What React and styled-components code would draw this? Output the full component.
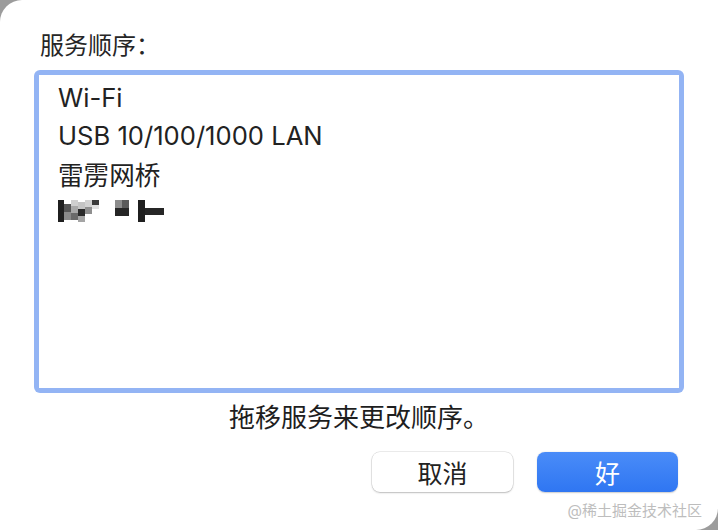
import React from "react";
import styled, { createGlobalStyle } from "styled-components";

const GlobalStyle = createGlobalStyle`
  html, body {
    margin: 0;
    padding: 0;
    background: #9c9c9c;
  }
  body {
    font-family: "Inter", "Noto Sans CJK SC", sans-serif;
    color: #222;
  }
`;

const services = ["Wi-Fi", "USB 10/100/1000 LAN", "雷雳网桥"];

// the blurred item in the screenshot, drawn as mosaic blocks
const mosaic = [
  [0, 0, 6, 22, "#1f1f1f"],
  [6, 4, 7, 8, "#555"],
  [6, 12, 7, 8, "#8a8a8a"],
  [13, 0, 7, 6, "#cfcfcf"],
  [13, 6, 7, 7, "#a8a8a8"],
  [13, 13, 7, 7, "#6a6a6a"],
  [20, 2, 7, 7, "#c4c4c4"],
  [20, 9, 7, 7, "#2a2a2a"],
  [20, 16, 7, 6, "#a5a5a5"],
  [27, 0, 7, 7, "#d2d2d2"],
  [27, 7, 7, 7, "#8f8f8f"],
  [34, 0, 7, 5, "#3a3a3a"],
  [34, 5, 7, 4, "#e0e0e0"],
  [57, 0, 7, 8, "#8c8c8c"],
  [57, 8, 14, 8, "#262626"],
  [64, 0, 7, 8, "#5a5a5a"],
  [80, 0, 7, 22, "#1f1f1f"],
  [87, 8, 19, 7, "#262626"],
];

const App = () => {
  return (
    <>
      <GlobalStyle />
      <Window>
        <Label>服务顺序：</Label>
        <FocusRing>
          <List>
            {services.map(s => (
              <Row key={s}>{s}</Row>
            ))}
            <Row>
              <svg width="106" height="22" viewBox="0 0 106 22">
                {mosaic.map(([x, y, w, h, c], i) => (
                  <rect key={i} x={x} y={y} width={w} height={h} fill={c} />
                ))}
              </svg>
            </Row>
          </List>
        </FocusRing>
        <Hint>拖移服务来更改顺序。</Hint>
        <Buttons>
          <Button>取消</Button>
          <Button primary>好</Button>
        </Buttons>
        <Watermark>@稀土掘金技术社区</Watermark>
      </Window>
    </>
  );
};

export default App;

const Window = styled.div`
  position: relative;
  width: 718px;
  height: 530px;
  box-sizing: border-box;
  background: #ffffff;
  border-top-left-radius: 22px;
  border-bottom-right-radius: 22px;
  display: flex;
  flex-direction: column;
  padding-top: 32px;
`;

const Label = styled.div`
  margin-left: 40px;
  font-size: 24px;
  line-height: 28px;
  color: #262626;
`;

const FocusRing = styled.div`
  margin: 10px 34px 0 34px;
  height: 323px;
  box-sizing: border-box;
  padding: 5px;
  border-radius: 6px;
  background: #93b4f4;
`;

const List = styled.div`
  height: 100%;
  box-sizing: border-box;
  background: #ffffff;
  padding-top: 3px;
  display: flex;
  flex-direction: column;
`;

const Row = styled.div`
  height: 38px;
  display: flex;
  align-items: center;
  padding-left: 19px;
  font-size: 25.6px;
  color: #222;
`;

const Hint = styled.div`
  margin-top: 11px;
  text-align: center;
  font-size: 26px;
  line-height: 28px;
  color: #1e1e1e;
`;

const Buttons = styled.div`
  margin-top: 20px;
  display: flex;
  justify-content: flex-end;
  gap: 24px;
  padding-right: 40px;
`;

const Button = styled.div`
  width: 141px;
  height: 40px;
  box-sizing: border-box;
  border-radius: 8px;
  display: flex;
  align-items: center;
  justify-content: center;
  font-size: 25px;
  background: ${p => (p.primary ? "linear-gradient(#4a8cf8, #2f76f2)" : "#ffffff")};
  color: ${p => (p.primary ? "#ffffff" : "#222")};
  box-shadow: ${p =>
    p.primary
      ? "0 0.5px 1.5px rgba(0,0,0,0.2)"
      : "0 0 0 0.5px rgba(0,0,0,0.15), 0 1px 2px rgba(0,0,0,0.2)"};
`;

const Watermark = styled.div`
  position: absolute;
  right: 16px;
  bottom: 10px;
  font-size: 15px;
  color: #bdbdbd;
`;
